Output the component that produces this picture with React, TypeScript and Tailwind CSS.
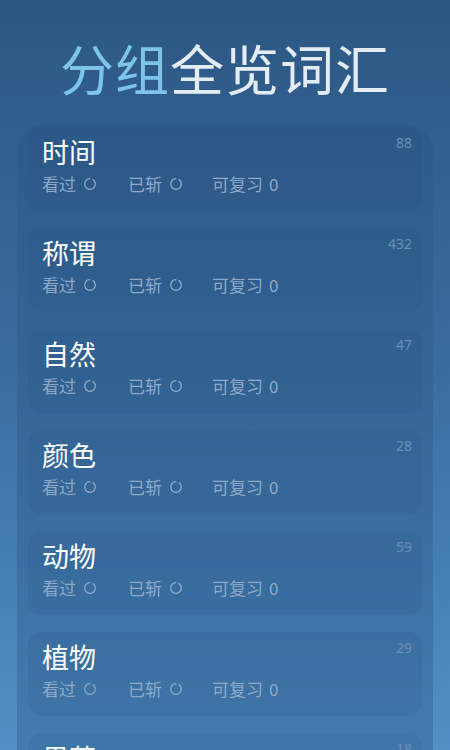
const groups = [
  { name: "时间", count: 88 },
  { name: "称谓", count: 432 },
  { name: "自然", count: 47 },
  { name: "颜色", count: 28 },
  { name: "动物", count: 59 },
  { name: "植物", count: 29 },
  { name: "果蔬", count: 18 },
];

function Ring() {
  return (
    <svg width="14" height="14" viewBox="0 0 14 14" className="ml-[7px] inline-block">
      <circle
        cx="7"
        cy="7"
        r="5.3"
        fill="none"
        stroke="currentColor"
        strokeWidth="1.3"
        strokeDasharray="30 3.4"
        transform="rotate(-60 7 7)"
      />
    </svg>
  );
}

export default function App() {
  return (
    <div
      className="h-[750px] w-[450px] overflow-hidden bg-gradient-to-b from-[#2c5784] via-[#3a6e9f] to-[#5290c5]"
      style={{ fontFamily: '"Noto Sans CJK SC", "Noto Sans", sans-serif' }}
    >
      <h1 className="flex h-[125px] items-center justify-center pt-[10px] text-[54px] font-normal leading-none tracking-[1px]">
        <span className="text-[#7ec3ea]">分组</span>
        <span className="text-[#e4edf6]">全览词汇</span>
      </h1>
      <div className="mx-[17px] flex flex-col gap-[17px] rounded-t-[26px] bg-[#2a5583]/35 px-[11px] pt-[2px]">
        {groups.map((g) => (
          <div
            key={g.name}
            className="relative h-[84px] rounded-[14px] bg-[#1f4a78]/12 pl-[14px] pt-[8px]"
          >
            <div className="text-[27px] leading-[34px] text-white">{g.name}</div>
            <div className="mt-[3px] flex items-center text-[17px] leading-[24px] text-[#8eaac8]">
              <span className="flex w-[86px] items-center">
                看过
                <Ring />
              </span>
              <span className="flex w-[84px] items-center">
                已斩
                <Ring />
              </span>
              <span className="flex items-center">
                可复习<span className="ml-[6px]">0</span>
              </span>
            </div>
            <span
              className="absolute right-[10px] top-[5px] text-[14px] text-[#6d8fb5]"
              style={{ fontFamily: '"Noto Sans", sans-serif' }}
            >
              {g.count}
            </span>
          </div>
        ))}
      </div>
    </div>
  );
}
